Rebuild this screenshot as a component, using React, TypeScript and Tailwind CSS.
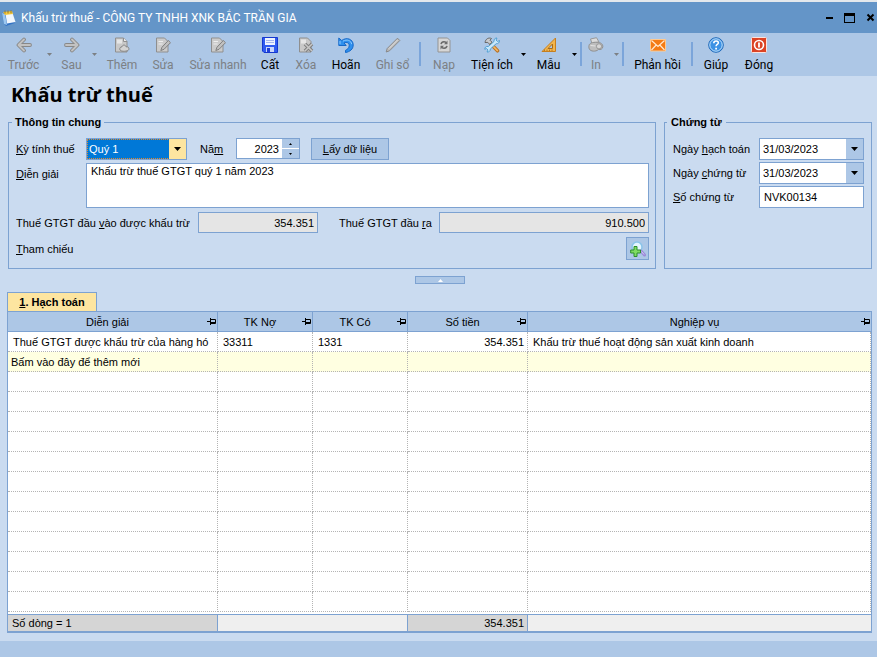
import { ReactNode } from 'react';

type ToolItem = {
  label: string;
  icon: ReactNode;
  width: string;
  disabled?: boolean;
  menu?: boolean;
  divider?: boolean;
};

function Caret() {
  return (
    <svg width="7" height="4" viewBox="0 0 7 4" fill="currentColor" aria-hidden="true">
      <path d="M0 0h7L3.5 4z" />
    </svg>
  );
}

function Svg({ children }: { children: ReactNode }) {
  return (
    <svg width="16" height="16" viewBox="0 0 16 16" fill="none" aria-hidden="true">
      {children}
    </svg>
  );
}

const pagePath = 'M1.5 1h8L13 4.5V15H1.5z';

function ArrowShape() {
  return (
    <g strokeLinecap="round" strokeLinejoin="round">
      <path d="M8 2.500L2.500 8 8 13.500M3 8h11" stroke="#888" strokeWidth="3.800" />
      <path d="M8 2.500L2.500 8 8 13.500M3 8h11" stroke="#c2c2c2" strokeWidth="1.900" />
    </g>
  );
}

const icons = {
  back: <Svg><ArrowShape /></Svg>,
  next: <Svg><g transform="translate(16 0) scale(-1 1)"><ArrowShape /></g></Svg>,
  add: (
    <Svg>
      <path d={pagePath} fill="#c9c9c9" stroke="#8f8f8f" />
      <path d="M3 2.500h5v4H3z" fill="#e6e6e6" />
      <path d="M9.5 1v3.500H13" fill="#eee" stroke="#8f8f8f" />
      <path d="M6 13c-.8-2 .6-3.200 2-3.200.5-2.300 3.500-2.300 4 0 2.300-.3 3.200 1 2.800 2.700-.6 2-7.600 2.500-8.800.5z" fill="#d4d4d4" stroke="#858585" />
    </Svg>
  ),
  edit: (
    <Svg>
      <path d={pagePath} fill="#cbcbcb" stroke="#8f8f8f" />
      <path d="M3.500 4.500h4.500M3.500 7h4" stroke="#eee" />
      <path d="M13.300 3.500l2.200 2.200-6.500 6.600-3.200 1.200 1.200-3.300z" fill="#c0c0c0" stroke="#808080" />
    </Svg>
  ),
  save: (
    <Svg>
      <path d="M.5.5h15v15H2L.5 14z" fill="#2f5bf0" stroke="#1538cf" />
      <path d="M3 1h10v7H3z" fill="#eef3ff" />
      <path d="M4 3.500h8M4 5.500h8" stroke="#a4b6ee" />
      <path d="M4 10h8v5H4z" fill="#c9d6fa" />
      <path d="M5 11h3v4H5z" fill="#2040d4" />
    </Svg>
  ),
  remove: (
    <Svg>
      <path d={pagePath} fill="#c9c9c9" stroke="#8f8f8f" />
      <path d="M3 2.500h5v4H3z" fill="#e6e6e6" />
      <path d="M7 7l7 7M14 7l-7 7" stroke="#808080" strokeWidth="3.600" />
      <path d="M7 7l7 7M14 7l-7 7" stroke="#c8c8c8" strokeWidth="1.500" />
    </Svg>
  ),
  undo: (
    <Svg>
      <path d="M.8 1v7.500h7.400L6 6c3-1.300 5.300 0 5.200 2.700-.1 2.300-1.700 3.700-3.700 4.600v2.200c4.300-.7 7.700-3.300 7.700-7.500C15.200 2 8.500-.2 3.700 3.500z" fill="#2f90ee" stroke="#1668c8" strokeLinejoin="round" />
      <path d="M2 4v3.200M5 4.200c4-2.500 8.200-.5 8.700 3" stroke="#8ccaff" />
    </Svg>
  ),
  post: (
    <Svg>
      <path d="M12.500 1.200l2.300 2.300L4.500 13.800 1.200 15l1-3.500z" fill="#bdbdbd" stroke="#888" strokeLinejoin="round" />
      <path d="M4 11.500l8.500-8.500" stroke="#dedede" />
    </Svg>
  ),
  reload: (
    <Svg>
      <path d="M2 1h9.500L14 3.500V15H2z" fill="#d6d6d6" stroke="#939393" />
      <path d="M5 7.200c.5-2.500 3.500-3.200 5.200-1.500M11 8.800c-.5 2.500-3.500 3.200-5.200 1.500" stroke="#6e6e6e" strokeWidth="1.600" />
      <path d="M11.500 3.500v3.700H8zM4.500 12.500V8.800H8z" fill="#6e6e6e" />
    </Svg>
  ),
  tools: (
    <Svg>
      <path d="M7 7l6.500 6.800" stroke="#b9762a" strokeWidth="3.600" strokeLinecap="round" />
      <path d="M8 8l5.300 5.500" stroke="#f5b763" strokeWidth="1.700" strokeLinecap="round" />
      <path d="M1 5.500C1.500 2 4.500.2 7.500 1.500L6 3.200l2 2-2.200 2.200-2-2z" fill="#c9cbce" stroke="#666" />
      <path d="M10 4.500c-.3-2.500 1.500-3.700 3-3.500L12 3l1.500 1.500 2-1c.3 2-1.500 3.500-3.300 3.200L6.300 12c.3 2-1.500 3.300-3.300 3l1-2-1.500-1.500-1.700.8C.5 10.500 2 9 4.300 9.500z" fill="#c8e8fb" stroke="#4a9bd0" strokeWidth=".9" />
    </Svg>
  ),
  template: (
    <Svg>
      <path d="M14.500 1v13.500H1z" fill="#f3b54c" stroke="#c67f1e" strokeLinejoin="round" />
      <path d="M11.500 7v4.500H7z" fill="#adc7e6" stroke="#a96c18" />
      <path d="M3.500 14v-1.500M6 14v-1.500M8.500 14v-1.500M11 14v-1.500" stroke="#a96c18" strokeWidth=".8" />
    </Svg>
  ),
  print: (
    <Svg>
      <path d="M2.500 2l6-1.300L11 5 4 6.500z" fill="#dcdcdc" stroke="#999" />
      <path d="M1 8.500C1.500 6 4.500 5.200 9 5.200c4 .2 6 2 5.800 4.600-.2 2.400-2.300 3-4.300 2.700-2.800 2.500-8 2-9.200-.5C.7 10.500.8 9.500 1 8.500z" fill="#bebebe" stroke="#909090" />
      <circle cx="11" cy="9.300" r="2.600" fill="#d7d7d7" stroke="#999" />
      <path d="M2.500 8.500l5 .5" stroke="#e5e5e5" />
    </Svg>
  ),
  mail: (
    <Svg>
      <path d="M.5 2.500h15v11.500H.5z" fill="#f47b15" stroke="#ffc98e" />
      <path d="M1.500 3.500L8 9.500l6.500-6M1.500 13l4.700-5M14.500 13L9.800 8" stroke="#ffe9d0" strokeWidth="1.200" />
    </Svg>
  ),
  help: (
    <Svg>
      <circle cx="8" cy="8" r="7.300" fill="#3d92e4" stroke="#236bb9" />
      <circle cx="8" cy="8" r="6.200" stroke="#c2e1fb" />
      <path d="M5.800 6.200C5.800 3.200 10.500 3.300 10.300 6c-.1 1.500-2.200 1.500-2.200 3.300" stroke="#fff" strokeWidth="1.600" />
      <path d="M7.200 10.700H9v1.700H7.200z" fill="#fff" />
    </Svg>
  ),
  power: (
    <Svg>
      <rect x=".5" y=".5" width="15" height="15" rx="1" fill="#dc4324" stroke="#fbe2dc" />
      <circle cx="8" cy="8" r="4.500" stroke="#fff" strokeWidth="1.600" />
      <path d="M8 5.500v5" stroke="#fff" strokeWidth="1.800" />
    </Svg>
  ),
};

const tools: ToolItem[] = [
  { label: 'Trước', icon: icons.back, width: 'w-[39px]', disabled: true, menu: true },
  { label: 'Sau', icon: icons.next, width: 'w-[33px]', disabled: true, menu: true },
  { label: 'Thêm', icon: icons.add, width: 'w-[44px]', disabled: true },
  { label: 'Sửa', icon: icons.edit, width: 'w-[38px]', disabled: true },
  { label: 'Sửa nhanh', icon: icons.edit, width: 'w-[72px]', disabled: true },
  { label: 'Cất', icon: icons.save, width: 'w-[32px]' },
  { label: 'Xóa', icon: icons.remove, width: 'w-[40px]', disabled: true },
  { label: 'Hoãn', icon: icons.undo, width: 'w-[40px]' },
  { label: 'Ghi sổ', icon: icons.post, width: 'w-[53px]', disabled: true, divider: true },
  { label: 'Nạp', icon: icons.reload, width: 'w-[46px]', disabled: true },
  { label: 'Tiện ích', icon: icons.tools, width: 'w-[50px]', menu: true },
  { label: 'Mẫu', icon: icons.template, width: 'w-[39px]', menu: true, divider: true },
  { label: 'In', icon: icons.print, width: 'w-[28px]', disabled: true, menu: true, divider: true },
  { label: 'Phản hồi', icon: icons.mail, width: 'w-[67px]', divider: true },
  { label: 'Giúp', icon: icons.help, width: 'w-[46px]' },
  { label: 'Đóng', icon: icons.power, width: 'w-[40px]' },
];

function TitleBar() {
  return (
    <header className="flex h-[33px] items-center border-t-2 border-[#e4e8ec] bg-[#6495c8] pl-0.5 font-[Roboto,sans-serif] text-white">
      <svg width="14" height="16" viewBox="0 0 14 16" className="mr-[5px] shrink-0" aria-hidden="true">
        <path d="M0 3l8-2 5 12-9 3-2-2z" fill="#3474c4" />
        <path d="M0 3l3 1 2 11-3-1z" fill="#9cc7ef" />
        <path d="M3.500 4l7-1 3 9-8.500 1.500z" fill="#f2f7fc" />
        <path d="M1 2l9-1 1 3-8 1z" fill="#f5c93c" />
        <path d="M3 .5v3M6 .5v3M9 .3v3" stroke="#8a6a1c" strokeWidth=".8" />
      </svg>
      <h1 className="flex-1 text-xs whitespace-nowrap">Khấu trừ thuế - CÔNG TY TNHH XNK BẮC TRẦN GIA</h1>
      <div className="flex items-center gap-2.5 text-black">
        <button type="button" aria-label="Thu nhỏ">
          <svg width="8" height="12" viewBox="0 0 8 12"><path d="M0 5h7v2H0z" fill="currentColor" /></svg>
        </button>
        <button type="button" aria-label="Phóng to">
          <svg width="12" height="12" viewBox="0 0 12 12"><path d="M0 1h11v10H0zM1 4v6h9V4z" fill="currentColor" fillRule="evenodd" /></svg>
        </button>
        <button type="button" aria-label="Đóng cửa sổ" className="mr-0.5">
          <svg width="9" height="12" viewBox="0 0 9 12"><path d="M1.500 2.500l6 6M7.500 2.500l-6 6" stroke="currentColor" strokeWidth="2" /></svg>
        </button>
      </div>
    </header>
  );
}

function Toolbar() {
  return (
    <nav className="flex h-[43px] items-start bg-[#adc7e6] pt-1 pl-1 font-[Roboto,sans-serif]">
      {tools.map((tool) => (
        <div key={tool.label} className={`flex shrink-0 items-start ${tool.disabled ? 'text-[#7c8084]' : 'text-black'}`}>
          <button type="button" disabled={tool.disabled} className={`flex flex-col items-center gap-[3px] ${tool.width}`}>
            {tool.icon}
            <span className="text-xs leading-[18px] whitespace-nowrap">{tool.label}</span>
          </button>
          {tool.menu && (
            <button type="button" aria-label={`Mở ${tool.label}`} className="flex w-3 justify-center pt-4">
              <svg width="5" height="3" viewBox="0 0 5 3" fill="currentColor"><path d="M0 0h5L2.500 3z" /></svg>
            </button>
          )}
          {tool.divider && <span className="mt-[5px] h-6 w-0.5 bg-[#7ba5da]" />}
        </div>
      ))}
    </nav>
  );
}

function DateField({ id, value }: { id: string; value: string }) {
  return (
    <div className="relative">
      <select id={id} defaultValue={value} className="block h-[22px] w-full appearance-none border border-[#7da2d1] bg-white pl-[3px]">
        <option>{value}</option>
      </select>
      <span className="pointer-events-none absolute inset-y-px right-px flex w-[17px] items-center justify-center bg-[#adc7e6]">
        <Caret />
      </span>
    </div>
  );
}

function GeneralInfo() {
  return (
    <fieldset className="min-w-0 flex-1 border border-[#7da2d1] pr-1.5 pb-2 pl-[7px]">
      <legend className="-ml-1 px-[3px] leading-4 font-bold">Thông tin chung</legend>
      <div className="flex flex-col gap-1 pt-2">
        <div className="flex h-[21px] items-center">
          <label htmlFor="period" className="w-[70px] shrink-0"><u>K</u>ỳ tính thuế</label>
          <div className="relative w-[101px]">
            <select id="period" defaultValue="Quý 1" className="block h-[22px] w-full appearance-none border border-[#7da2d1] bg-[#0078d7] pl-0.5 text-white outline-1 -outline-offset-2 outline-dotted outline-[#e08a30]">
              <option>Quý 1</option>
            </select>
            <span className="pointer-events-none absolute inset-y-px right-px flex w-[17px] items-center justify-center bg-[#fde5a0]">
              <Caret />
            </span>
          </div>
          <label htmlFor="year" className="w-9 shrink-0 pl-[13px] whitespace-nowrap">Nă<u>m</u></label>
          <div className="ml-[13px] flex h-[21px] w-16 border border-[#7da2d1] bg-white">
            <input id="year" type="text" defaultValue="2023" className="w-0 flex-1 pr-[3px] text-right" />
            <div className="flex w-[17px] flex-col gap-px">
              <button type="button" aria-label="Tăng năm" className="flex flex-1 items-center justify-center bg-[#adc7e6]">
                <svg width="3" height="2" viewBox="0 0 3 2"><path d="M0 2h3L1.500 0z" /></svg>
              </button>
              <button type="button" aria-label="Giảm năm" className="flex flex-1 items-center justify-center bg-[#adc7e6]">
                <svg width="3" height="2" viewBox="0 0 3 2"><path d="M0 0h3L1.500 2z" /></svg>
              </button>
            </div>
          </div>
          <button type="button" className="ml-[11px] h-[22px] w-[78px] border border-[#7da2d1] bg-[#adc7e6]"><u>L</u>ấy dữ liệu</button>
        </div>
        <div className="flex">
          <label htmlFor="note" className="w-[70px] shrink-0 pt-1"><u>D</u>iễn giải</label>
          <textarea id="note" defaultValue="Khấu trừ thuế GTGT quý 1 năm 2023" className="block h-[45px] flex-1 resize-none border border-[#7da2d1] bg-white px-1" />
        </div>
        <div className="flex h-[21px] items-center">
          <label htmlFor="taxIn" className="w-[182px] shrink-0 whitespace-nowrap">Thuế GTGT đầu <u>v</u>ào được khấu trừ</label>
          <input id="taxIn" readOnly value="354.351" className="h-[21px] w-[120px] border border-[#7da2d1] bg-[#e5e5e5] px-[3px] text-right" />
          <label htmlFor="taxOut" className="ml-[21px] w-[100px] shrink-0 whitespace-nowrap">Thuế GTGT đầu <u>r</u>a</label>
          <input id="taxOut" readOnly value="910.500" className="h-[21px] w-0 flex-1 border border-[#7da2d1] bg-[#e5e5e5] px-[3px] text-right" />
        </div>
        <div className="flex items-center justify-between">
          <span><u>T</u>ham chiếu</span>
          <button type="button" aria-label="Thêm tham chiếu" className="flex size-[23px] items-center justify-center border border-[#7da2d1] bg-[#adc7e6]">
            <svg width="16" height="16" viewBox="0 0 16 16" fill="none" aria-hidden="true">
              <circle cx="7" cy="6" r="5" fill="#e4f5ff" stroke="#8ac4ea" strokeWidth="1.500" />
              <path d="M11 10l3.500 4" stroke="#9b8ad8" strokeWidth="3" strokeLinecap="round" />
              <path d="M11.500 10.500l2.500 3" stroke="#d5ccf5" />
              <path d="M4 5.500h3v3.500h3.500v3H7v3.500H4V12H.7V9H4z" fill="#7fdb62" stroke="#2c8f2c" />
            </svg>
          </button>
        </div>
      </div>
    </fieldset>
  );
}

function Voucher() {
  return (
    <fieldset className="w-52 shrink-0 border border-[#7da2d1] pr-[7px] pl-2">
      <legend className="-ml-1.5 px-1 leading-4 font-bold">Chứng từ</legend>
      <div className="grid grid-cols-[86px_1fr] items-center gap-y-0.5 pt-2 whitespace-nowrap">
        <label htmlFor="postDate">Ngày <u>h</u>ạch toán</label>
        <DateField id="postDate" value="31/03/2023" />
        <label htmlFor="voucherDate">Ngày <u>c</u>hứng từ</label>
        <DateField id="voucherDate" value="31/03/2023" />
        <label htmlFor="voucherNo"><u>S</u>ố chứng từ</label>
        <input id="voucherNo" defaultValue="NVK00134" className="h-[22px] w-full min-w-0 border border-[#7da2d1] bg-white px-1" />
      </div>
    </fieldset>
  );
}

const columns = ['Diễn giải', 'TK Nợ', 'TK Có', 'Số tiền', 'Nghiệp vụ'];
const blankRows = Array.from({ length: 12 }, (_, i) => i);
const cell = 'h-5 overflow-hidden border-r border-b border-dotted border-[#b4b4b4] whitespace-nowrap';

function Entries() {
  return (
    <section className="-ml-px flex flex-1 flex-col">
      <div role="tablist" className="flex">
        <button type="button" role="tab" aria-selected="true" className="h-[19px] w-[90px] border border-b-0 border-[#7da2d1] bg-[#fde5a0] font-bold">
          <u>1</u>. Hạch toán
        </button>
      </div>
      <div className="flex flex-1 flex-col border-x border-t border-b-2 border-[#7da2d1] bg-white">
        <table className="w-full table-fixed border-separate border-spacing-0">
          <colgroup>
            <col className="w-[210px]" />
            <col className="w-[95px]" />
            <col className="w-[95px]" />
            <col className="w-[120px]" />
            <col />
          </colgroup>
          <thead>
            <tr>
              {columns.map((name) => (
                <th key={name} className="h-5 border-r border-b border-[#7da2d1] bg-[#adc7e6] p-0 font-normal last:border-r-0">
                  <div className="flex items-center pr-px">
                    <span className="flex-1">{name}</span>
                    <svg width="9" height="7" viewBox="0 0 9 7" fill="none" aria-hidden="true">
                      <path d="M0 3.500h3M3.500 0v7M4 1.500h4.500v4H4M4 4.500h4" stroke="#000" />
                    </svg>
                  </div>
                </th>
              ))}
            </tr>
          </thead>
          <tbody>
            <tr>
              <td className={`${cell} pl-[5px]`}>Thuế GTGT được khấu trừ của hàng hó</td>
              <td className={`${cell} pl-[5px]`}>33311</td>
              <td className={`${cell} pl-[5px]`}>1331</td>
              <td className={`${cell} pr-[3px] text-right`}>354.351</td>
              <td className={`${cell} pl-[5px]`}>Khấu trừ thuế hoạt động sản xuất kinh doanh</td>
            </tr>
            <tr className="bg-[#ffffe1]">
              <td className={`${cell} pl-[3px]`}>Bấm vào đây để thêm mới</td>
              <td className={cell} />
              <td className={cell} />
              <td className={cell} />
              <td className={cell} />
            </tr>
            {blankRows.map((row) => (
              <tr key={row}>
                {columns.map((name) => (
                  <td key={name} className={cell} />
                ))}
              </tr>
            ))}
            <tr>
              <td colSpan={5} className="h-0.5" />
            </tr>
          </tbody>
          <tfoot>
            <tr className="bg-[#efefef]">
              <td className="h-[17px] border-t border-r border-[#7da2d1] bg-[#d5d5d5] pl-1">Số dòng = 1</td>
              <td colSpan={2} className="border-t border-r border-[#7da2d1]" />
              <td className="border-t border-r border-[#7da2d1] bg-[#d5d5d5] pr-[3px] text-right">354.351</td>
              <td className="border-t border-[#7da2d1]" />
            </tr>
          </tfoot>
        </table>
      </div>
    </section>
  );
}

export default function App() {
  return (
    <div className="flex min-h-screen flex-col bg-[#cadbf0] font-['Liberation_Sans',Arial,sans-serif] text-[11px] leading-[14px] text-black">
      <TitleBar />
      <Toolbar />
      <main className="flex flex-1 flex-col pr-[5px] pb-2 pl-2">
        <h2 className="pt-1 pl-[3px] font-['Open_Sans',sans-serif] text-xl leading-[30px] font-bold">Khấu trừ thuế</h2>
        <div className="mt-1 flex gap-2">
          <GeneralInfo />
          <Voucher />
        </div>
        <button type="button" aria-label="Thu gọn" className="mt-[7px] mb-2 flex h-2 w-[50px] items-center justify-center self-center border border-[#7da2d1] bg-[#adc7e6] text-white">
          <svg width="5" height="3" viewBox="0 0 5 3" fill="currentColor"><path d="M0 3h5L2.500 0z" /></svg>
        </button>
        <Entries />
      </main>
      <footer className="h-4 bg-[#adc7e6]" />
    </div>
  );
}
